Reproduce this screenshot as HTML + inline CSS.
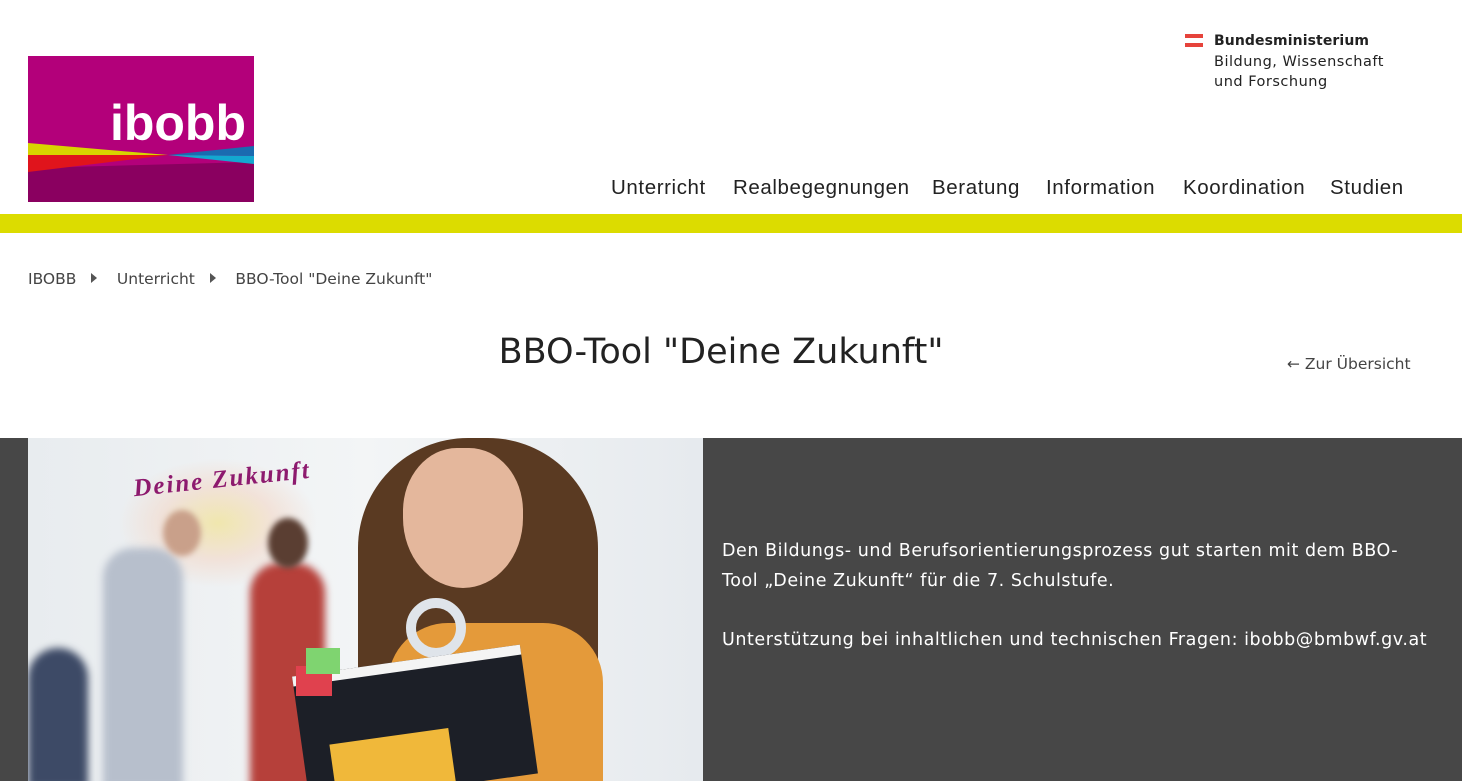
<!DOCTYPE html>
<html><head><meta charset="utf-8"><style>
*{margin:0;padding:0;box-sizing:border-box}
body{width:1462px;height:781px;overflow:hidden;background:#fff;font-family:"Liberation Sans",sans-serif;color:#222;position:relative}
.abs{position:absolute}
.nav span{position:absolute;top:176px;font-size:20.5px;letter-spacing:0.6px;color:#222;white-space:nowrap}
.bar{left:0;top:214px;width:1462px;height:19px;background:#dcdc00}
.bc{top:270px;font-family:"DejaVu Sans",sans-serif;font-size:15.5px;letter-spacing:0px;color:#444;white-space:nowrap}
.tri{display:inline-block;width:0;height:0;border-left:6px solid #555;border-top:5px solid transparent;border-bottom:5px solid transparent;vertical-align:1px}
</style></head><body>
<svg class="abs" style="left:28px;top:56px" width="226" height="146" viewBox="0 0 226 146">
<rect width="226" height="146" fill="#b3007a"/>
<polygon points="0,112 226,106 226,146 0,146" fill="#8a0060"/>
<polygon points="0,87 140,99 0,100" fill="#d8d400"/>
<polygon points="0,99 140,99 0,116" fill="#e0141c"/>
<polygon points="140,99 226,90 226,100" fill="#1a6bb0"/>
<polygon points="140,99 226,100 226,108" fill="#13a8d0"/>
<text x="218" y="84" text-anchor="end" font-family="Liberation Sans,sans-serif" font-weight="bold" font-size="50" fill="#fff">ibobb</text>
</svg>
<svg class="abs" style="left:1185px;top:34px" width="18" height="14"><rect y="0" width="18" height="4" fill="#e6433b"/><rect y="9" width="18" height="4" fill="#e6433b"/></svg>
<div class="abs" style="left:1214px;top:31px;font-family:'DejaVu Sans',sans-serif;font-size:14.5px;line-height:20.5px;color:#222;letter-spacing:0.5px">
<div style="font-weight:bold;font-size:14px;letter-spacing:0.1px">Bundesministerium</div><div>Bildung, Wissenschaft</div><div>und Forschung</div></div>
<div class="nav">
<span style="left:611px">Unterricht</span>
<span style="left:733px">Realbegegnungen</span>
<span style="left:932px">Beratung</span>
<span style="left:1046px">Information</span>
<span style="left:1183px">Koordination</span>
<span style="left:1330px">Studien</span>
</div>
<div class="abs bar"></div>
<div class="abs bc" style="left:28px">IBOBB&nbsp;&nbsp;&nbsp;<span class="tri"></span>&nbsp;&nbsp;&nbsp;&nbsp;Unterricht&nbsp;&nbsp;&nbsp;<span class="tri"></span>&nbsp;&nbsp;&nbsp;&nbsp;BBO-Tool "Deine Zukunft"</div>
<div class="abs" style="left:0;width:1442px;top:332px;text-align:center;font-size:35px;color:#222;font-family:'DejaVu Sans',sans-serif">BBO-Tool "Deine Zukunft"</div>
<div class="abs" style="left:1287px;top:355px;font-family:'DejaVu Sans',sans-serif;font-size:15.5px;color:#444">&#x2190; Zur Übersicht</div>
<div class="abs" style="left:0;top:438px;width:1462px;height:343px;background:#474747"></div>
<div class="abs" style="left:28px;top:438px;width:675px;height:343px;overflow:hidden;background:linear-gradient(90deg,#e8ecef,#f3f5f6 50%,#e6eaee)">
<div class="abs" style="left:90px;top:20px;width:200px;height:130px;background:radial-gradient(ellipse at center,#f2e080 0,#f3d8c8 40%,transparent 70%);opacity:.6"></div>
<div class="abs" style="left:75px;top:110px;width:80px;height:240px;background:#b7bfcc;border-radius:30px 30px 0 0;filter:blur(4px)"></div>
<div class="abs" style="left:135px;top:72px;width:38px;height:46px;background:#c9a08a;border-radius:50%;filter:blur(3px)"></div>
<div class="abs" style="left:222px;top:125px;width:75px;height:230px;background:#b6403a;border-radius:30px 30px 0 0;filter:blur(4px)"></div>
<div class="abs" style="left:240px;top:80px;width:40px;height:50px;background:#5a3e32;border-radius:50%;filter:blur(3px)"></div>
<div class="abs" style="left:0;top:210px;width:60px;height:140px;background:#3d4a66;border-radius:30px 30px 0 0;filter:blur(4px)"></div>
<div class="abs" style="left:330px;top:0;width:240px;height:343px;background:#5a3a22;border-radius:110px 110px 0 0"></div>
<div class="abs" style="left:375px;top:10px;width:120px;height:140px;background:#e4b79c;border-radius:45% 45% 50% 50%"></div>
<div class="abs" style="left:360px;top:185px;width:215px;height:170px;background:#e49a3a;border-radius:60px 60px 0 0"></div>
<div class="abs" style="left:378px;top:160px;width:60px;height:60px;border:10px solid #dfe4ea;border-radius:50%"></div>
<div class="abs" style="left:272px;top:222px;width:230px;height:130px;background:#1c1f27;transform:rotate(-8deg);border-top:10px solid #f4f4f4"></div>
<div class="abs" style="left:305px;top:298px;width:120px;height:60px;background:#f0b83a;transform:rotate(-8deg)"></div>
<div class="abs" style="left:268px;top:228px;width:36px;height:30px;background:#e0414e"></div>
<div class="abs" style="left:278px;top:210px;width:34px;height:26px;background:#7fd470"></div>
<div class="abs" style="left:105px;top:28px;font-family:'Liberation Serif',serif;font-style:italic;font-weight:bold;font-size:25px;color:#8d1a6e;transform:rotate(-6deg);letter-spacing:2px">Deine Zukunft</div>
</div>
<div class="abs" style="left:722px;top:537px;width:730px;font-family:'DejaVu Sans',sans-serif;font-size:17.5px;line-height:29.5px;letter-spacing:0.55px;color:#fff;white-space:nowrap">
Den Bildungs- und Berufsorientierungsprozess gut starten mit dem BBO-<br>Tool „Deine Zukunft“ für die 7. Schulstufe.<br><br>Unterstützung bei inhaltlichen und technischen Fragen: ibobb@bmbwf.gv.at</div>
</body></html>
